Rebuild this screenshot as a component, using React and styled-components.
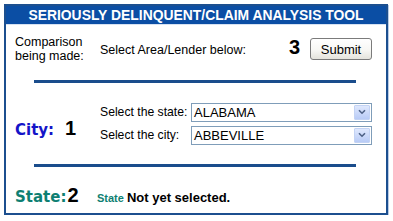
import React from "react";
import styled, { createGlobalStyle } from "styled-components";

const Global = createGlobalStyle`
  html, body { margin: 0; padding: 0; background: #ffffff; }
  body { font-family: "Liberation Sans", Arial, sans-serif; color: #000; }
`;

const Page = styled.div`
  padding: 4px 0 0 4px;
`;

const Panel = styled.div`
  width: 380px;
  height: 207px;
  border: 2px solid #1c4f8f;
  box-shadow: 1px 1px 0 #b9cce6;
  display: flex;
  flex-direction: column;
  background: #fff;
`;

const Header = styled.div`
  height: 18px;
  background: #0b4ea4;
  border-bottom: 1px solid #d6e2f2;
  color: #fff;
  font-family: "Liberation Sans", Arial, sans-serif;
  font-weight: bold;
  font-size: 13.9px;
  line-height: 18px;
  text-align: center;
  white-space: nowrap;
`;

const Row = styled.div`
  display: flex;
  align-items: ${(p) => p.$align || "flex-start"};
  height: ${(p) => p.$h}px;
  padding: ${(p) => p.$pt || 0}px 14px 0 9px;
  box-sizing: border-box;
`;

const Divider = styled.div`
  height: 3px;
  width: 322px;
  margin-left: 28px;
  background: #1a4d8c;
  flex: none;
`;

const Plain = styled.div`
  font-size: ${(p) => p.$size || 12.5}px;
  line-height: ${(p) => p.$lh || 15}px;
  width: ${(p) => (p.$w ? `${p.$w}px` : "auto")};
  margin-top: ${(p) => p.$mt || 0}px;
  flex: none;
  white-space: nowrap;
`;

const Number = styled.div`
  font-family: "Liberation Sans", Arial, sans-serif;
  font-weight: bold;
  font-size: 20px;
  line-height: 20px;
  margin-top: ${(p) => p.$mt || 0}px;
  margin-left: ${(p) => (p.$ml === "auto" ? "auto" : `${p.$ml || 0}px`)};
  flex: none;
`;

const SubmitButton = styled.button`
  width: 62px;
  height: 22px;
  margin-left: 10px;
  margin-top: ${(p) => p.$mt || 0}px;
  padding: 0;
  border: 1px solid #7b7b7b;
  border-radius: 3px;
  background: linear-gradient(#ffffff 0%, #f7f7f4 55%, #e4e3dc 100%);
  font-family: "Liberation Sans", Arial, sans-serif;
  font-size: 13px;
  color: #000;
  flex: none;
`;

const LabelCell = styled.div`
  display: flex;
  align-items: baseline;
  align-self: ${(p) => p.$self || "auto"};
  width: ${(p) => p.$w}px;
  margin-top: ${(p) => p.$mt || 0}px;
  flex: none;
`;

const Heading = styled.div`
  font-family: "DejaVu Sans", Verdana, sans-serif;
  font-weight: bold;
  font-size: 15px;
  line-height: 18px;
  color: ${(p) => p.$color};
  flex: none;
`;

const SelectGroup = styled.div`
  display: flex;
  flex-direction: column;
  gap: 4px;
`;

const SelectLine = styled.div`
  display: flex;
  align-items: center;
`;

const SelectBox = styled.div`
  width: 181px;
  height: 19px;
  box-sizing: border-box;
  border: 1px solid #7f9db9;
  background: #fff;
  display: flex;
  align-items: center;
  justify-content: space-between;
  padding: 0 1px 0 2px;
  font-size: 13px;
`;

const ArrowBtn = styled.div`
  width: 16px;
  height: 15px;
  box-sizing: border-box;
  border: 1px solid #c3d3f4;
  border-radius: 1px;
  background: linear-gradient(#dfe8fd, #b8cbf6);
  display: flex;
  align-items: center;
  justify-content: center;
`;

const Note = styled.div`
  font-family: "Liberation Sans", Arial, sans-serif;
  font-weight: bold;
  font-size: ${(p) => p.$size}px;
  color: ${(p) => p.$color || "#000"};
  margin-right: ${(p) => p.$mr || 0}px;
  flex: none;
  white-space: nowrap;
`;

const Select = ({ value }) => (
  <SelectBox>
    <span>{value}</span>
    <ArrowBtn>
      <svg width="8" height="6" viewBox="0 0 8 6">
        <path d="M1 1.2 L4 4.2 L7 1.2" fill="none" stroke="#4d6185" strokeWidth="1.6" />
      </svg>
    </ArrowBtn>
  </SelectBox>
);

export default function App() {
  return (
    <Page>
      <Global />
      <Panel>
        <Header>SERIOUSLY DELINQUENT/CLAIM ANALYSIS TOOL</Header>
        <Row $h={55}>
          <Plain $w={85} $lh={14} $mt={10}>
            Comparison
            <br />
            being made:
          </Plain>
          <Plain $mt={18}>Select Area/Lender below:</Plain>
          <Number $ml="auto" $mt={12}>3</Number>
          <SubmitButton $mt={13}>Submit</SubmitButton>
        </Row>
        <Divider />
        <Row $h={81} $align="center">
          <LabelCell $w={85} $self="flex-start" $mt={35}>
            <Heading $color="#1414c8">City:</Heading>
            <Number $ml={11}>1</Number>
          </LabelCell>
          <SelectGroup>
            <SelectLine>
              <Plain $w={91} $size={12.2}>Select the state:</Plain>
              <Select value="ALABAMA" />
            </SelectLine>
            <SelectLine>
              <Plain $w={91} $size={12.2}>Select the city:</Plain>
              <Select value="ABBEVILLE" />
            </SelectLine>
          </SelectGroup>
        </Row>
        <Divider />
        <Row $h={46} $align="baseline" $pt={18}>
          <LabelCell $w={82}>
            <Heading $color="#0e7f72">State:</Heading>
            <Number $ml={1}>2</Number>
          </LabelCell>
          <Note $size={11} $color="#0e7f72" $mr={3}>State</Note>
          <Note $size={13}>Not yet selected.</Note>
        </Row>
      </Panel>
    </Page>
  );
}
